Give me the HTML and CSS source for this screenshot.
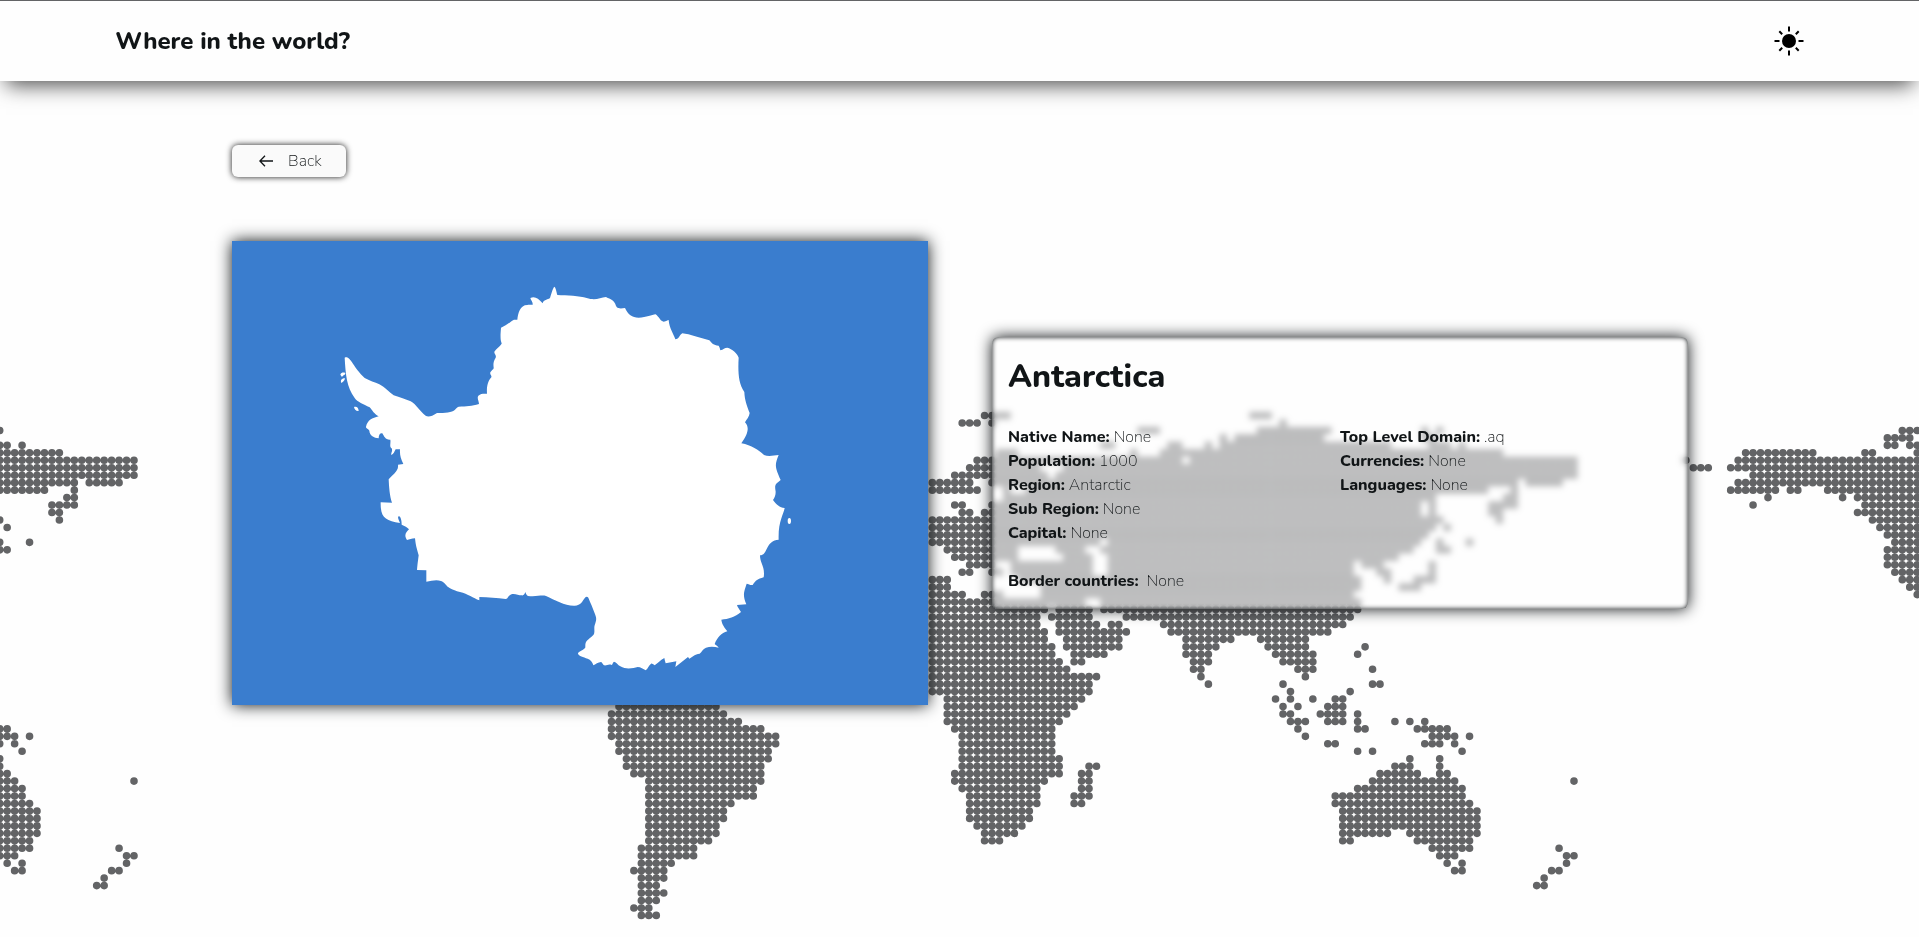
FILE: index.html
```html
<!DOCTYPE html>
<html lang="en">
<head>
  <meta charset="utf-8">
  <meta name="viewport" content="width=device-width, initial-scale=1">
  <title>Where in the world?</title>
  <link rel="stylesheet" href="styles.css">
</head>
<body>
  <!-- Dotted world map: one unit per dot, repeated every 193 columns -->
  <svg class="world-map" viewBox="-17.96 -57.7 257.2 125.6" preserveAspectRatio="xMidYMid slice" aria-hidden="true">
    <defs>
      <path id="land" d="M114-2h3.1M150-2h2.1
M111-1h2.1M115-1h.1M154-1h.1
M44 0h3.1M135 0h2.1M151 0h9.1M173 0h.1M175 0h.1
M42 1h3.1M146 1h.1M148 1h11.1M173 1h1.1
M42 2h1.1M45 2h2.1M130 2h1.1M139 2h1.1M144 2h.1M146 2h22.1M174 2h2.1M178 2h.1
M23 3h9.1M39 3h1.1M46 3h1.1M116 3h2.1M134 3h.1M138 3h45.1
M15 4h.1M22 4h26.1M113 4h27.1M142 4h51.1
M16 5h2.1M21 5h27.1M112 5h9.1M125 5h68.1
M24 6h24.1M110 6h12.1M124 6h69.1
M22 7h26.1M107 7h5.1M115 7h70.1M187 7h4.1
M21 8h6.1M29 8h1.1M34 8h14.1M107 8h6.1M117 8h.1M120 8h61.1M185 8h.1
M26 9h.1M36 9h.1M38 9h10.1M117 9h57.1M184 9h1.1
M24 10h.1M39 10h9.1M110 10h1.1M115 10h57.1M174 10h.1M182 10h3.1
M38 11h10.1M111 11h1.1M114 11h58.1M174 11h.1M182 11h1.1
M40 12h8.1M107 12h68.1M183 12h.1
M41 13h7.1M107 13h67.1M176 13h.1
M42 14h6.1M107 14h66.1
M43 15h5.1M107 15h22.1M131 15h41.1M175 15h.1M179 15h.1
M42 16h6.1M109 16h9.1M124 16h3.1M130 16h41.1M175 16h1.1
M42 17h6.1M110 17h8.1M125 17h3.1M131 17h38.1
M42 18h6.1M112 18h3.1M118 18h10.1M131 18h32.1M165 18h2.1M174 18h.1
M43 19h5.1M111 19h1.1M115 19h1.1M118 19h10.1M131 19h32.1M167 19h1.1M174 19h.1
M44 20h4.1M107 20h2.1M119 20h45.1M168 20h.1M172 20h2.1
M45 21h3.1M107 21h2.1M122 21h42.1M170 21h2.1
M46 22h2.1M107 22h4.1M114 22h2.1M122 22h41.1
M107 23h20.1M130 23h34.1
M107 24h15.1M124 24h4.1M130 24h34.1
M107 25h14.1M123 25h5.1M133 25h30.1
M107 26h14.1M124 26h5.1M131 26h1.1M138 26h24.1
M107 27h15.1M124 27h9.1M139 27h21.1
M107 28h15.1M125 28h7.1M141 28h6.1M151 28h6.1
M107 29h16.1M125 29h7.1M141 29h4.1M152 29h5.1M165 29h.1
M107 30h16.1M126 30h4.1M141 30h3.1M153 30h5.1M164 30h.1
M107 31h17.1M126 31h1.1M142 31h2.1M154 31h4.1
M107 32h18.1M142 32h1.1M156 32h2.1M166 32h.1
M107 33h22.1M143 33h.1M157 33h.1
M107 34h21.1M144 34h.1M154 34h.1M166 34h1.1
M107 35h21.1M155 35h.1M163 35h.1
M109 36h18.1M153 36h.1M155 36h.1M158 36h.1M161 36h1.1
M65 37h13.1M109 37h17.1M154 37h.1M156 37h.1M160 37h2.1
M64 38h15.1M109 38h16.1M154 38h1.1M159 38h3.1M164 38h.1
M64 39h17.1M109 39h15.1M155 39h2.1M160 39h2.1M164 39h.1M169 39h.1M171 39h.1M173 39h.1
M64 40h20.1M110 40h13.1M156 40h.1M164 40h1.1M172 40h4.1
M64 41h22.1M111 41h12.1M157 41h.1M174 41h3.1M179 41h.1
M65 42h21.1M111 42h12.1M160 42h1.1M173 42h2.1M177 42h.1
M65 43h20.1M111 43h12.1M164 43h.1M166 43h.1M178 43h.1
M66 44h19.1M111 44h13.1M171 44h.1M175 44h.1
M66 45h18.1M111 45h13.1M128 45h1.1M169 45h2.1M175 45h.1
M67 46h17.1M110 46h14.1M127 46h1.1M167 46h5.1M175 46h1.1
M69 47h15.1M110 47h12.1M127 47h1.1M166 47h11.1M193 47h.1
M69 48h14.1M111 48h10.1M127 48h1.1M164 48h14.1
M69 49h14.1M112 49h9.1M126 49h2.1M161 49h17.1
M69 50h11.1M112 50h9.1M126 50h1.1M161 50h18.1
M69 51h10.1M112 51h8.1M162 51h18.1
M69 52h10.1M112 52h8.1M162 52h18.1
M69 53h9.1M113 53h6.1M162 53h18.1
M69 54h9.1M114 54h4.1M162 54h6.1M171 54h9.1
M69 55h8.1M114 55h2.1M162 55h1.1M172 55h7.1
M68 56h7.1M174 56h5.1M191 56h.1
M68 57h7.1M175 57h2.1M192 57h1.1
M68 58h4.1M176 58h.1M178 58h.1M192 58h.1
M67 59h4.1M177 59h1.1M190 59h1.1
M68 60h3.1M189 60h.1
M68 61h2.1M188 61h1.1
M68 62h3.1
M68 63h2.1
M67 64h2.1
M68 65h2.1"/>
    </defs>
    <use href="#land" x="-193"/>
    <use href="#land"/>
    <use href="#land" x="193"/>
  </svg>

  <header class="site-header">
    <h1 class="site-title">Where in the world?</h1>
    <button class="theme-toggle" type="button" aria-label="Toggle theme">
      <svg class="theme-icon" viewBox="0 0 30 30" aria-hidden="true">
        <circle cx="15" cy="15" r="7"/>
        <path d="M15 .5v5M15 24.500v5M.5 15h5M24.500 15h5M5.300 5.300l2.900 2.900M21.800 21.800l2.900 2.900M5.300 24.700l2.900-2.900M21.800 8.200l2.900-2.900"/>
      </svg>
    </button>
  </header>

  <main class="page">
    <button class="back-button" type="button">
      <svg class="back-icon" viewBox="0 0 14 12" aria-hidden="true"><path d="M14 6H1M6 .7.900 6 6 11.300"/></svg>
      Back
    </button>

    <div class="country">
      <svg class="flag" viewBox="-264 -87 2088 1392" role="img" aria-label="Flag of Antarctica">
        <rect class="flag-field" x="-264" y="-87" width="2088" height="1392"/>
        <path class="flag-land" d="M703 50C707 52 709 64 712 75C740 76 780 78 800 84C825 92 840 84 858 81C868 87 880 88 886 102C889 112 892 118 915 114C924 134 936 143 956 143C980 143 995 134 1007 133C1017 140 1022 155 1031 155C1040 154 1042 150 1046 150C1048 175 1060 190 1066 208C1078 208 1078 194 1087 190C1110 192 1140 204 1168 211C1176 220 1180 226 1196 227C1199 232 1200 236 1201 241C1210 239 1214 233 1222 233C1236 236 1252 250 1256 263C1254 300 1254 340 1273 366C1274 390 1280 405 1289 429C1288 440 1280 448 1275 457C1288 470 1286 490 1264 520C1295 526 1315 540 1332 555C1344 560 1360 557 1376 555C1364 585 1364 590 1382 630C1364 644 1364 645 1367 665C1367 675 1364 683 1359 690C1370 705 1378 712 1394 714C1390 735 1374 755 1376 809C1335 812 1345 855 1320 856C1320 880 1336 890 1331 922C1312 928 1308 930 1298 945C1290 946 1286 942 1280 941C1272 965 1267 975 1279 1003L1251 1005C1252 1012 1260 1020 1263 1026C1245 1041 1225 1047 1204 1049C1206 1065 1214 1072 1222 1084C1204 1089 1192 1103 1184 1122C1188 1126 1194 1129 1196 1133C1184 1130 1170 1129 1158 1133C1148 1137 1146 1145 1139 1151C1124 1153 1118 1160 1108 1166L1104 1161L1066 1191L1069 1174L1037 1180C1035 1174 1034 1169 1033 1164C1020 1170 1014 1180 1004 1186C999 1183 996 1180 993 1181C985 1188 984 1196 977 1201C970 1197 962 1191 953 1191C940 1194 920 1200 901 1189C893 1185 890 1177 882 1175C878 1178 878 1183 875 1185C865 1181 860 1188 852 1186C848 1184 847 1177 843 1176C835 1176 826 1183 820 1186C817 1176 812 1169 803 1166C790 1161 776 1158 774 1151C773 1144 797 1138 796 1131C795 1110 804 1111 820 1095C826 1087 821 1075 824 1066C830 1048 830 1046 824 1030C819 1015 812 1000 805 983C803 980 798 979 795 983C787 993 783 1006 764 1007C735 1008 705 990 678 978C664 974 650 981 624 978C619 975 618 971 616 966C614 972 612 977 605 976C593 976 577 965 566 979C563 984 561 987 557 987C532 984 505 982 478 981L478 991C460 984 444 972 420 966C370 952 385 943 363 933C350 928 335 932 319 935L319 901L291 900C292 885 295 865 296 856C290 835 287 825 285 805C275 806 268 808 261 810C251 794 258 788 267 778C262 771 254 769 245 764C245 755 243 740 237 739C230 740 238 752 240 759C195 752 181 742 182 697L216 698C209 680 207 650 206 628C215 615 237 605 234 584L250 582C242 565 239 555 240 538L227 538C223 545 221 553 214 555C212 548 219 544 215 535C207 530 213 520 211 509C196 510 193 500 187 490C181 488 176 494 176 505C162 503 149 498 148 482C145 475 138 476 138 470C143 450 156 444 176 439C164 434 156 420 149 412C130 402 112 396 104 384C80 350 77 315 74 263C90 255 98 290 134 324C148 332 165 337 178 343C195 351 208 368 221 376C240 383 256 387 272 394C288 402 300 425 317 437C323 441 334 441 351 429C375 429 396 427 405 419C409 415 411 412 416 410C440 409 455 408 477 402C477 393 470 384 475 377C483 370 490 371 501 371C500 355 501 336 514 322C516 315 509 315 511 307C515 300 522 297 521 293C520 284 519 275 527 263C530 254 522 253 523 245C530 234 538 232 545 221C545 214 539 218 543 173C557 168 571 155 582 149L592 149C594 130 600 105 622 105C627 103 634 105 638 104C639 95 633 93 631 84C645 78 654 85 668 100C671 88 682 90 690 84C694 72 698 55 703 50Z"/>
        <path class="flag-land" d="M61 314C64 307 70 307 76 309C76 316 70 314 66 321ZM75 325C74 333 68 336 64 339C60 330 66 325 75 325ZM102 411C108 408 116 411 116 423C108 424 103 418 102 411Z"/>
        <ellipse class="flag-land" cx="1408" cy="753" rx="5" ry="9"/>
      </svg>

      <section class="details">
        <h2 class="country-name">Antarctica</h2>
        <div class="facts">
          <ul class="fact-list">
            <li><strong>Native Name:</strong> None</li>
            <li><strong>Population:</strong> 1000</li>
            <li><strong>Region:</strong> Antarctic</li>
            <li><strong>Sub Region:</strong> None</li>
            <li><strong>Capital:</strong> None</li>
          </ul>
          <ul class="fact-list">
            <li><strong>Top Level Domain:</strong> .aq</li>
            <li><strong>Currencies:</strong> None</li>
            <li><strong>Languages:</strong> None</li>
          </ul>
        </div>
        <p class="borders"><strong>Border countries:</strong> <span>None</span></p>
      </section>
    </div>
  </main>
</body>
</html>
```
FILE: styles.css
```css
*,
*::before,
*::after {
  box-sizing: border-box;
}

body {
  margin: 0;
  min-height: 100vh;
  background: #fefefe;
  color: #111517;
  font-family: Nunito, Lato, sans-serif;
  font-size: 16px;
  font-weight: 200;
  line-height: 24px;
}

.world-map {
  position: fixed;
  inset: 0;
  z-index: -1;
  width: 100%;
  height: 100%;
  fill: none;
  stroke: #636466;
  stroke-width: 1.02;
  stroke-linecap: round;
  stroke-dasharray: 0 1;
}

.site-header {
  display: flex;
  align-items: center;
  justify-content: space-between;
  height: 81px;
  padding: 0 6%;
  border-top: 1px solid #636466;
  background: #fefefe;
  box-shadow: 0 10px 20px -6px rgba(0, 0, 0, .7);
}

.site-title {
  margin: 0;
  font-size: 24px;
  font-weight: 800;
  line-height: 36px;
}

.theme-toggle {
  display: flex;
  padding: 0;
  border: 0;
  background: none;
  cursor: pointer;
}

.theme-icon {
  width: 30px;
  height: 30px;
  stroke: #000;
  stroke-width: 2;
}

.theme-icon circle {
  stroke: none;
}

.page {
  padding: 64px 231px 64px 232px;
}

.back-button {
  display: flex;
  align-items: center;
  gap: 15px;
  height: 32px;
  padding: 0 24px 0 27px;
  border: 0;
  border-radius: 6px;
  background: #fafafa;
  box-shadow: 0 0 6px rgba(0, 0, 0, .9);
  color: inherit;
  font: inherit;
  cursor: pointer;
}

.back-icon {
  width: 14px;
  height: 12px;
  fill: none;
  stroke: #111517;
  stroke-width: 1.3;
}

.country {
  display: grid;
  grid-template-columns: 1fr 1fr;
  align-items: center;
  gap: 64px;
  margin-top: 64px;
}

.flag {
  display: block;
  width: 100%;
  height: auto;
  box-shadow: 0 0 15px #111517;
}

.flag-field {
  fill: #3a7dce;
}

.flag-land {
  fill: #fff;
}

.details {
  padding: 16px;
  border-radius: 6px;
  background: rgba(254, 254, 254, .5);
  box-shadow: 0 0 15px #111517, inset 0 0 5px #111517;
  backdrop-filter: blur(3px);
}

.country-name {
  margin: 0 0 24px;
  font-size: 32px;
  font-weight: 800;
  line-height: 48px;
}

.facts {
  display: grid;
  grid-template-columns: 1fr 1fr;
}

.fact-list {
  margin: 0;
  padding: 0;
  list-style: none;
}

.details strong {
  font-weight: 800;
}

.borders {
  margin: 24px 0 0;
}

.borders span {
  margin-left: 4px;
}
```
